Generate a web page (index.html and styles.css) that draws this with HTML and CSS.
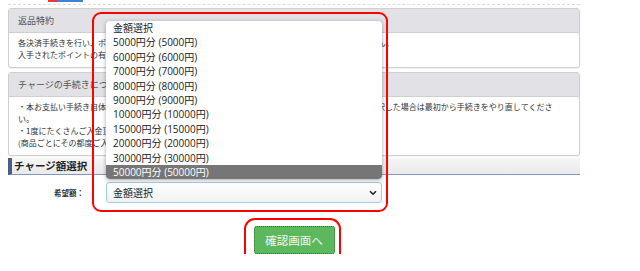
FILE: index.html
```html
<!DOCTYPE html>
<html lang="ja">
  <head>
    <meta charset="utf-8">
    <title>チャージ額選択</title>
    <link rel="stylesheet" href="styles.css">
  </head>

  <body>
    <div class="page">
      <div class="logo-strip"><span class="red"></span><span class="blue"></span></div>
      <div class="rule"></div>

      <div class="panel">
        <div class="panel-heading">返品特約</div>
        <div class="panel-body">
          各決済手続きを行い、ポイントを入手された後のお客様都合でのキャンセル・返品はお受けできません。<br>
          入手されたポイントの有効期限は購入日より180日間です。
        </div>
      </div>

      <div class="panel">
        <div class="panel-heading">チャージの手続きについて</div>
        <div class="panel-body">
          ・本お支払い手続き自体に有効期限がございます。万一途中でブラウザを閉じたり、誤った金額を選択した場合は最初から手続きをやり直してくださ<br>
          い。<br>
          ・1度にたくさんご入金頂くことも可能です。<br>
          (商品ごとにその都度ご入金頂く必要はございません)
        </div>
      </div>

      <h3 class="section-title">チャージ額選択</h3>

      <div class="form-row">
        <label class="form-label" for="amount">希望額：</label>
        <div class="select" id="amount">
          <span>金額選択</span>
          <svg class="chevron" width="8" height="6" viewBox="0 0 8 6">
            <path d="M1 1.2 L4 4.2 L7 1.2" fill="none" stroke="#222" stroke-width="1.6"/>
          </svg>
        </div>
      </div>

      <div class="actions">
        <button class="btn-confirm" type="button">確認画面へ</button>
      </div>

      <!-- open dropdown of the select -->
      <ul class="dropdown">
        <li>金額選択</li>
        <li>5000円分 (5000円)</li>
        <li>6000円分 (6000円)</li>
        <li>7000円分 (7000円)</li>
        <li>8000円分 (8000円)</li>
        <li>9000円分 (9000円)</li>
        <li>10000円分 (10000円)</li>
        <li>15000円分 (15000円)</li>
        <li>20000円分 (20000円)</li>
        <li>30000円分 (30000円)</li>
        <li class="selected">50000円分 (50000円)</li>
      </ul>

      <!-- red marker annotations -->
      <div class="mark mark-select"></div>
      <div class="mark mark-button"></div>
    </div>
  </body>
</html>
```

FILE: styles.css
```css
body {
  margin: 0;
  padding: 0;
  font-family: "Noto Sans CJK JP", sans-serif;
  color: #333;
  background-color: #fff;
}

.page {
  position: relative;
  width: 572px;
  margin-left: 8px;
}

.logo-strip {
  display: flex;
  height: 2px;
  margin-left: 40px;
}

.logo-strip .red {
  width: 9px;
  background-color: #e0393e;
}

.logo-strip .blue {
  width: 26px;
  background-color: #3f7fd6;
}

.rule {
  margin-top: 2px;
  border-top: 1px dashed #dcdcdc;
}

.panel {
  margin-top: 3px;
  border: 1px solid #cfcfcf;
  border-radius: 3px;
  background-color: #fff;
  box-shadow: 0 1px 1px rgba(0, 0, 0, 0.06);
}

.panel + .panel {
  margin-top: 4px;
}

.panel-heading {
  height: 23px;
  line-height: 23px;
  padding: 0 9px;
  background-color: #e2e2e6;
  border-bottom: 1px solid #cfcfcf;
  font-size: 9px;
  color: #555;
}

.panel-body {
  padding: 4px 9px 6px;
  font-size: 8px;
  line-height: 12px;
  color: #333;
  white-space: nowrap;
}

.section-title {
  margin: 2px 0 0;
  height: 16px;
  line-height: 16px;
  padding-left: 2px;
  border-left: 4px solid #4b5c8a;
  border-bottom: 1px solid #8598c0;
  background: linear-gradient(#f6f6f6, #e9e9e9);
  font-size: 10.5px;
  font-weight: bold;
  color: #222;
}

.form-row {
  display: flex;
  align-items: center;
  gap: 22px;
  margin-top: 7px;
}

.form-label {
  width: 76px;
  text-align: right;
  font-size: 7.5px;
  font-weight: bold;
  color: #333;
}

.select {
  box-sizing: border-box;
  display: flex;
  justify-content: space-between;
  align-items: center;
  width: 276px;
  height: 21px;
  padding: 0 4px 0 6px;
  border: 1px solid #a3cbea;
  border-radius: 3px;
  background: linear-gradient(#fff, #f1f1f1);
  font-size: 10px;
  color: #222;
}

.actions {
  display: flex;
  justify-content: center;
  margin-top: 23px;
}

.btn-confirm {
  width: 81px;
  height: 28px;
  padding: 0;
  border: none;
  border-radius: 3px;
  background-color: #5cb85c;
  color: #f4f4f4;
  font-family: "Noto Sans CJK JP", sans-serif;
  font-size: 11.5px;
  outline: 1px dotted #3b6e3b;
  outline-offset: -1px;
}

.dropdown {
  position: absolute;
  left: 98px;
  top: 21px;
  width: 276px;
  margin: 0;
  padding: 0;
  list-style: none;
  background-color: #fff;
  border-radius: 4px;
  box-shadow: 0 1px 4px rgba(0, 0, 0, 0.35);
  overflow: hidden;
  font-family: "Open Sans", "Noto Sans CJK JP", sans-serif;
  font-size: 10px;
  color: #222;
}

.dropdown li {
  height: 14.4px;
  line-height: 14.4px;
  padding-left: 7px;
}

.dropdown li.selected {
  background-color: #767676;
  color: #fff;
}

.mark {
  position: absolute;
  box-sizing: border-box;
  border: 2.5px solid #f00;
  border-radius: 9px;
}

.mark-select {
  left: 84px;
  top: 12px;
  width: 296px;
  height: 200px;
}

.mark-button {
  left: 236px;
  top: 218px;
  width: 97px;
  height: 47px;
  border-radius: 11px;
}
```
